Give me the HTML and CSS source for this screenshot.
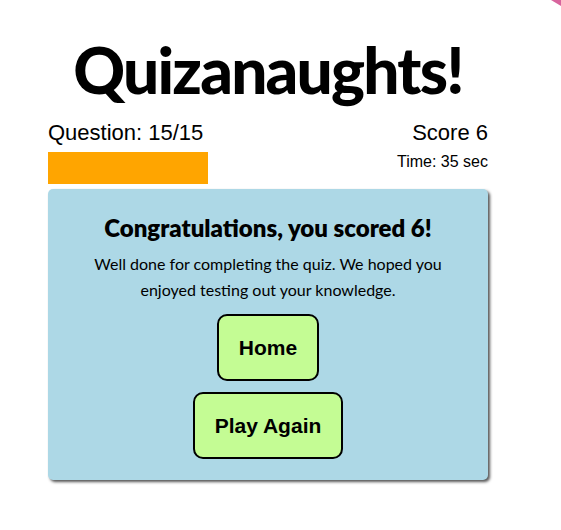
FILE: index.html
```html
<!DOCTYPE html>
<html>
<head>
<meta charset="utf-8">
<link rel="stylesheet" href="styles.css">
</head>
<body>
<div class="corner"></div>
<main class="app">
  <h1 class="title">Quizanaughts!</h1>
  <div class="hud">
    <div class="hud-left">
      <div class="question">Question: 15/15</div>
      <div class="progress"></div>
    </div>
    <div class="hud-right">
      <div class="score">Score 6</div>
      <div class="time">Time: 35 sec</div>
    </div>
  </div>
  <section class="card">
    <h2 class="card-title">Congratulations, you scored 6!</h2>
    <p class="card-text">Well done for completing the quiz. We hoped you<br>enjoyed testing out your knowledge.</p>
    <div class="actions">
      <button class="btn">Home</button>
      <button class="btn">Play Again</button>
    </div>
  </section>
</main>
</body>
</html>
```

FILE: styles.css
```css
html, body {
  margin: 0;
  padding: 0;
  background: #ffffff;
  overflow: hidden;
}
body {
  font-family: "Liberation Sans", Arial, sans-serif;
  color: #000;
  position: relative;
  height: 530px;
}
.corner {
  position: absolute;
  top: 0;
  right: 0;
  width: 10px;
  height: 6px;
  background: #d8649d;
  clip-path: polygon(0 0, 100% 0, 100% 100%);
}
.app {
  width: 440px;
  margin-left: 48px;
  padding-top: 30px;
}
.title {
  margin: 0;
  text-align: center;
  font-family: "Lato", sans-serif;
  font-weight: 900;
  font-size: 64px;
  letter-spacing: -1.8px;
  line-height: 80px;
}
.hud {
  display: flex;
  justify-content: space-between;
  margin-top: 10px;
}
.question, .score {
  font-size: 22px;
  line-height: 26px;
}
.progress {
  width: 160px;
  height: 32px;
  background: #ffa500;
  margin-top: 6px;
}
.hud-right {
  text-align: right;
}
.time {
  font-size: 16px;
  line-height: 18px;
  margin-top: 7px;
}
.card {
  margin-top: 5px;
  background: #add8e6;
  border-radius: 5px;
  box-shadow: 2px 2px 3px #555;
  padding: 24px 20px 21px;
  text-align: center;
}
.card-title {
  margin: 0;
  font-family: "Lato", sans-serif;
  font-weight: 800;
  font-size: 24px;
  line-height: 30px;
}
.card-text {
  margin: 8px 0 11px;
  font-family: "Lato", sans-serif;
  font-size: 16px;
  line-height: 26px;
}
.actions {
  display: flex;
  flex-direction: column;
  align-items: center;
  gap: 11px;
}
.btn {
  font-family: "Liberation Sans", Arial, sans-serif;
  font-weight: bold;
  font-size: 21px;
  line-height: 25px;
  padding: 19px 20px;
  background: #c4fc94;
  border: 2px solid #000;
  border-radius: 10px;
  color: #000;
}
```
